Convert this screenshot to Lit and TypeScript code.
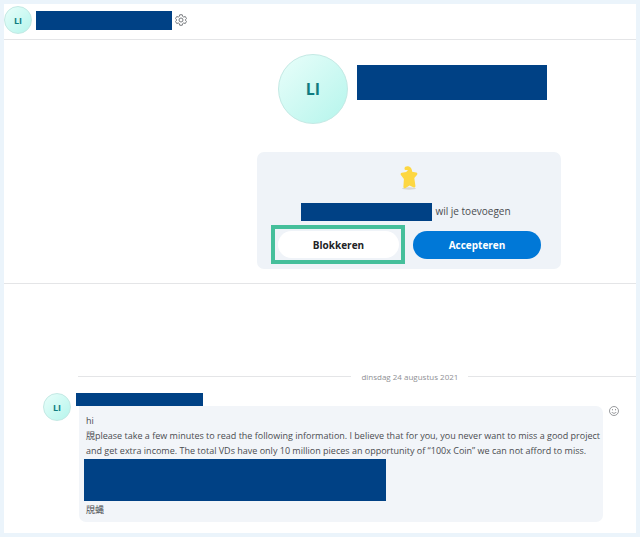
import { LitElement, html, css } from "lit";
import { customElement, property } from "lit/decorators.js";

@customElement("user-avatar")
class UserAvatar extends LitElement {
  @property() initials = "";
  @property({ reflect: true }) size = "small";

  static styles = css`
    :host {
      display: flex;
      flex: none;
      align-items: center;
      justify-content: center;
      box-sizing: border-box;
      width: 28px;
      height: 28px;
      border: 1px solid #c3e9e4;
      border-radius: 50%;
      background: linear-gradient(135deg, #e9fefa, #b5f5ec);
      color: #0f7c80;
      font-size: 9px;
      font-weight: 700;
    }
    :host([size="large"]) {
      width: 70px;
      height: 70px;
      font-size: 16px;
    }
  `;

  render() {
    return html`<span>${this.initials}</span>`;
  }
}

@customElement("app-root")
class AppRoot extends LitElement {
  static styles = css`
    :host {
      display: block;
      box-sizing: border-box;
      min-height: 100vh;
      padding: 4px;
      background: #ebf4fb;
      color: #4a4c50;
      font: 10px/15px "Open Sans", "Noto Sans", "Noto Sans CJK SC", sans-serif;
    }
    .window {
      box-sizing: border-box;
      min-height: calc(100vh - 8px);
      padding-bottom: 11px;
      background: #fff;
    }
    .redacted {
      flex: none;
      background: #004185;
    }
    button {
      padding: 0;
      border: 0;
      background: none;
      font: inherit;
      color: inherit;
    }
    .icon-button {
      display: flex;
      color: #777a7e;
    }
    .bar {
      display: flex;
      align-items: center;
      height: 35px;
      border-bottom: 1px solid #e4e5e7;
    }
    .bar user-avatar {
      margin-bottom: 3px;
    }
    .bar-name {
      width: 136px;
      height: 19px;
      margin: 0 3px 2px 4px;
    }
    .bar .icon-button {
      margin-bottom: 3px;
    }
    .invite {
      display: flex;
      flex-direction: column;
      align-items: center;
      padding: 14px 0 14px 178px;
      border-bottom: 1px solid #e4e5e7;
    }
    .profile {
      display: flex;
      box-sizing: border-box;
      width: 304px;
      gap: 9px;
      padding-left: 21px;
    }
    .profile-name {
      width: 190px;
      height: 35px;
      margin-top: 11px;
    }
    .card {
      box-sizing: border-box;
      width: 304px;
      margin-top: 28px;
      padding: 13px 0 5px;
      border-radius: 7px;
      background: #eff3f8;
    }
    .star {
      display: block;
      margin: 0 auto;
    }
    .request,
    .actions {
      display: flex;
      align-items: center;
      padding: 0 20px 0 14px;
    }
    .request {
      justify-content: center;
      gap: 3px;
      height: 18px;
      margin-top: 12px;
    }
    .request span {
      margin-bottom: 2px;
    }
    .request-name {
      width: 131px;
      height: 18px;
    }
    .actions {
      gap: 8px;
      margin-top: 4px;
    }
    .highlight {
      display: flex;
      box-sizing: border-box;
      width: 134px;
      padding: 2px 2px 2px 3px;
      border: 4px solid #45bf9b;
    }
    .action {
      flex: 1;
      height: 28px;
      padding-top: 1px;
      border-radius: 14px;
      font-weight: 700;
    }
    .block {
      height: 27px;
      background: #fff;
      color: #222326;
    }
    .accept {
      background: #0078d7;
      color: #fff;
    }
    .date {
      display: flex;
      align-items: center;
      gap: 10px;
      margin: 85px 0 9px 74px;
      color: #8f9195;
      font-size: 8px;
    }
    .date::before,
    .date::after {
      content: "";
      height: 1px;
      background: #e4e5e7;
    }
    .date::before {
      flex: 274;
    }
    .date::after {
      flex: 168;
    }
    .message {
      display: flex;
      padding: 0 17px 0 39px;
    }
    .body {
      flex: 1;
      margin: 0 6px 0 5px;
    }
    .sender {
      width: 127px;
      height: 13px;
    }
    .bubble {
      margin-left: 3px;
      padding: 7px 1px 5px 7px;
      border-radius: 0 7px 7px 7px;
      background: #f2f5f9;
      font-size: 9px;
    }
    .bubble p {
      margin: 0;
    }
    .hidden-text {
      width: 302px;
      height: 42px;
      margin: 1px 0 1px -2px;
    }
    .react {
      align-self: flex-start;
      margin-top: 13px;
    }
  `;

  render() {
    return html`
      <main class="window">
        <header class="bar">
          <user-avatar initials="LI"></user-avatar>
          <div class="redacted bar-name"></div>
          <button class="icon-button" aria-label="Instellingen">
            <svg width="12" height="12" viewBox="0 0 24 24" fill="none" stroke="currentColor" stroke-width="2" stroke-linejoin="round">
              <path d="M9.5 1.5h5l.8 3.3 2 1.2 3.3-1 2.4 4.3-2.4 2.4v.6l2.4 2.4-2.4 4.3-3.3-1-2 1.2-.8 3.3h-5l-.8-3.3-2-1.2-3.3 1L1 14.7l2.4-2.4v-.6L1 9.3 3.4 5l3.3 1 2-1.2z" />
              <circle cx="12" cy="12" r="4" />
            </svg>
          </button>
        </header>

        <section class="invite">
          <div class="profile">
            <user-avatar initials="LI" size="large"></user-avatar>
            <div class="redacted profile-name"></div>
          </div>
          <div class="card">
            <svg class="star" width="18" height="26" viewBox="0 0 18 26">
              <ellipse cx="9" cy="23.5" rx="7" ry="1.2" fill="#d9d8d3" />
              <path d="M4.500 3.500C4.500 1.500 7 .8 9 1.600c2 .8 3 2.700 3.200 5.200l3.900.6c1.400.2 1.700 1.600.8 2.500l-2.600 3.200 1.100 7.700c.2 1.500-.9 2.200-2.100 1.500L9.600 20.600l-4 2.400c-1.200.7-2.400-.1-2.200-1.500l.5-7.600L1.100 10.300C.2 9.300.6 7.900 1.900 7.700L6.200 7.100 8 5 6.500 5C5.300 5.200 4.500 4.600 4.500 3.500z" fill="#fdd742" />
            </svg>
            <div class="request">
              <div class="redacted request-name"></div>
              <span>wil je toevoegen</span>
            </div>
            <div class="actions">
              <div class="highlight"><button class="action block">Blokkeren</button></div>
              <button class="action accept">Accepteren</button>
            </div>
          </div>
        </section>

        <div class="date"><span>dinsdag 24 augustus 2021</span></div>
        <article class="message">
          <user-avatar initials="LI"></user-avatar>
          <div class="body">
            <div class="redacted sender"></div>
            <div class="bubble">
              <p>hi</p>
              <p>
                覑please take a few minutes to read the following information. I believe that for you, you never want to miss a good project<br />
                and get extra income. The total VDs have only 10 million pieces an opportunity of “100x Coin” we can not afford to miss.
              </p>
              <div class="redacted hidden-text"></div>
              <p>覑蝿</p>
            </div>
          </div>
          <button class="icon-button react" aria-label="Reageren">
            <svg width="10" height="10" viewBox="0 0 20 20" fill="none" stroke="currentColor" stroke-width="1.5">
              <circle cx="10" cy="10" r="9" />
              <path d="M5.5 12c1.500 3.500 7.500 3.500 9 0" />
              <path d="M7 6.500v2M13 6.500v2" stroke-width="2" />
            </svg>
          </button>
        </article>
      </main>
    `;
  }
}
